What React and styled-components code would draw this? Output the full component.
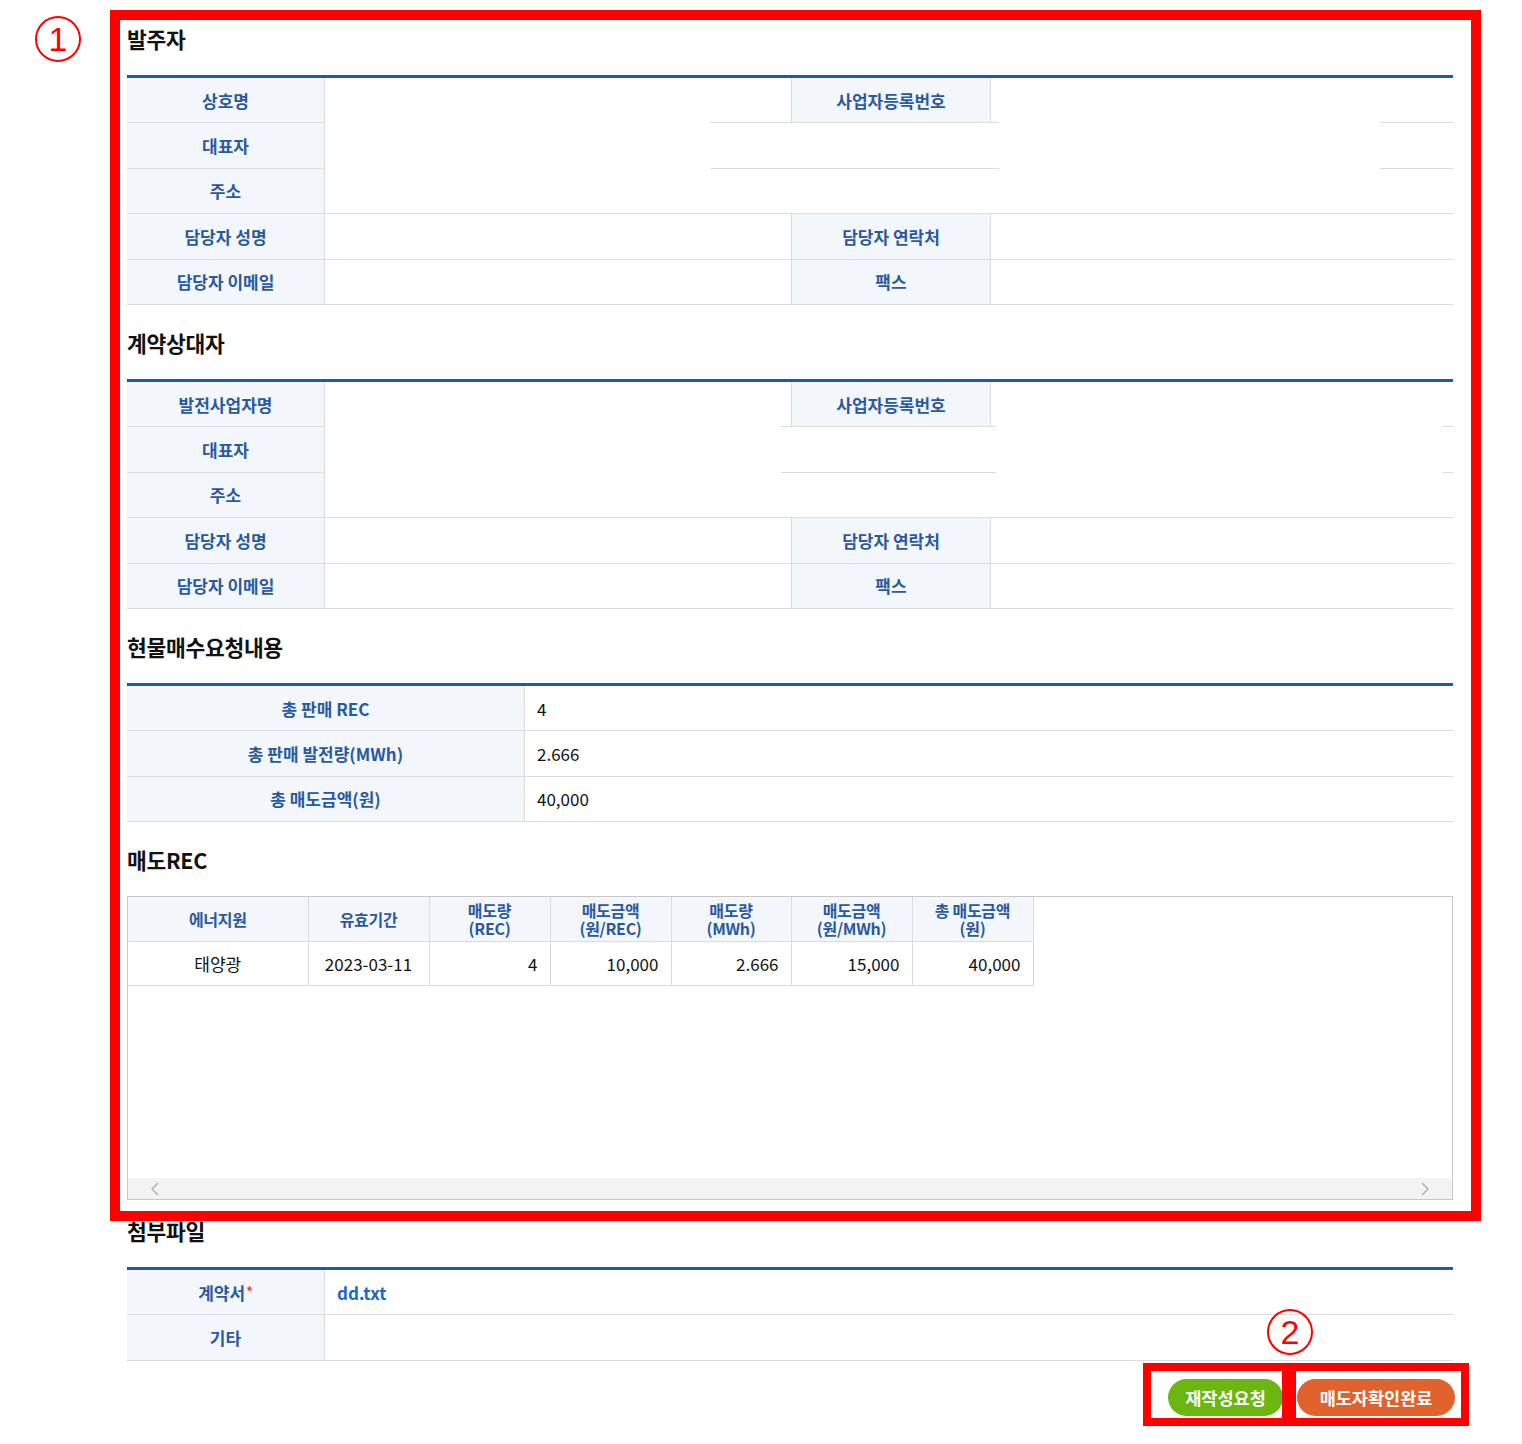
import React from 'react'
import styled, { createGlobalStyle } from 'styled-components'

const GlobalStyle = createGlobalStyle`
  html, body {
    margin: 0;
    padding: 0;
    background: #fff;
  }
  body {
    font-family: "Noto Sans CJK KR", "Noto Sans", sans-serif;
  }
`

// segment layout of the two party tables (widths in px, 1326 total)
const ordererRows = [
  [
    { w: 198, label: '상호명', line: true },
    { w: 385 },
    { w: 81, line: true },
    { w: 200, label: '사업자등록번호', line: true, edge: true },
    { w: 8, line: true },
    { w: 381 },
    { w: 73, line: true },
  ],
  [
    { w: 198, label: '대표자', line: true },
    { w: 386 },
    { w: 288, line: true },
    { w: 381 },
    { w: 73, line: true },
  ],
  [
    { w: 198, label: '주소', line: true },
    { w: 1128, line: true },
  ],
  [
    { w: 198, label: '담당자 성명', line: true },
    { w: 466, line: true },
    { w: 200, label: '담당자 연락처', line: true, edge: true },
    { w: 462, line: true },
  ],
  [
    { w: 198, label: '담당자 이메일', line: true },
    { w: 466, line: true },
    { w: 200, label: '팩스', line: true, edge: true },
    { w: 462, line: true },
  ],
]

const partnerRows = [
  [
    { w: 198, label: '발전사업자명', line: true },
    { w: 456 },
    { w: 10, line: true },
    { w: 200, label: '사업자등록번호', line: true, edge: true },
    { w: 5, line: true },
    { w: 447 },
    { w: 10, line: true },
  ],
  [
    { w: 198, label: '대표자', line: true },
    { w: 456 },
    { w: 215, line: true },
    { w: 447 },
    { w: 10, line: true },
  ],
  [
    { w: 198, label: '주소', line: true },
    { w: 1128, line: true },
  ],
  ordererRows[3],
  ordererRows[4],
]

const requestRows = [
  [
    { w: 398, label: '총 판매 REC', line: true },
    { w: 928, text: '4', line: true },
  ],
  [
    { w: 398, label: '총 판매 발전량(MWh)', line: true },
    { w: 928, text: '2.666', line: true },
  ],
  [
    { w: 398, label: '총 매도금액(원)', line: true },
    { w: 928, text: '40,000', line: true },
  ],
]

const recCols = [
  { w: 180, head: ['에너지원'], value: '태양광', align: 'center' },
  { w: 121, head: ['유효기간'], value: '2023-03-11', align: 'center' },
  { w: 121, head: ['매도량', '(REC)'], value: '4', align: 'right' },
  { w: 121, head: ['매도금액', '(원/REC)'], value: '10,000', align: 'right' },
  { w: 120, head: ['매도량', '(MWh)'], value: '2.666', align: 'right' },
  { w: 121, head: ['매도금액', '(원/MWh)'], value: '15,000', align: 'right' },
  { w: 121, head: ['총 매도금액', '(원)'], value: '40,000', align: 'right' },
]

const InfoTable = ({ rows }) => (
  <Table>
    {rows.map((row, i) => (
      <Row key={i}>
        {row.map((c, j) =>
          c.label ? (
            <HeadCell key={j} $w={c.w} $line={c.line} $edge={c.edge}>
              {c.label}
              {c.required && <Required>*</Required>}
            </HeadCell>
          ) : (
            <Cell key={j} $w={c.w} $line={c.line} $pad={!!(c.text || c.link)}>
              {c.link ? <FileLink href="#">{c.link}</FileLink> : c.text}
            </Cell>
          )
        )}
      </Row>
    ))}
  </Table>
)

const Chevron = ({ dir }) => (
  <svg width="10" height="14" viewBox="0 0 10 14">
    <polyline
      points={dir === 'left' ? '8,1 2,7 8,13' : '2,1 8,7 2,13'}
      fill="none"
      stroke="#b4b4b4"
      strokeWidth="1.6"
    />
  </svg>
)

const App = () => {
  return (
    <Page>
      <GlobalStyle />
      <Content>
        <Title>발주자</Title>
        <InfoTable rows={ordererRows} />

        <Title $gap={22}>계약상대자</Title>
        <InfoTable rows={partnerRows} />

        <Title $gap={22}>현물매수요청내용</Title>
        <InfoTable rows={requestRows} />

        <Title $gap={22}>매도REC</Title>
        <ScrollBox>
          <RecTable>
            <colgroup>
              {recCols.map((c, i) => <col key={i} style={{ width: c.w }} />)}
            </colgroup>
            <thead>
              <tr>
                {recCols.map((c, i) => (
                  <Th key={i}>
                    {c.head.map((h, k) => <HeadLine key={k}>{h}</HeadLine>)}
                  </Th>
                ))}
              </tr>
            </thead>
            <tbody>
              <tr>
                {recCols.map((c, i) => (
                  <Td key={i} $align={c.align}>{c.value}</Td>
                ))}
              </tr>
            </tbody>
          </RecTable>
          <Scrollbar>
            <Chevron dir="left" />
            <Chevron dir="right" />
          </Scrollbar>
        </ScrollBox>

        <Title $gap={15}>첨부파일</Title>
        <InfoTable
          rows={[
            [
              { w: 198, label: '계약서', required: true, line: true },
              { w: 1128, link: 'dd.txt', line: true },
            ],
            [
              { w: 198, label: '기타', line: true },
              { w: 1128, line: true },
            ],
          ]}
        />

        <Buttons>
          <Button $tone="#6cb612" $w={115}>재작성요청</Button>
          <Button $tone="#e0632e" $w={158}>매도자확인완료</Button>
        </Buttons>
      </Content>

      {/* annotation overlays */}
      <Frame $x={110} $y={10} $w={1371} $h={1211} $t={10} />
      <Frame $x={1143} $y={1363} $w={147} $h={63} $t={8} />
      <Frame $x={1288} $y={1363} $w={181} $h={63} $t={8} />
      <Marker $x={35} $y={16}>1</Marker>
      <Marker $x={1267} $y={1309}>2</Marker>
    </Page>
  )
}

export default App

const Page = styled.div`
  position: relative;
  width: 1522px;
  min-height: 1444px;
  background: #fff;
`

const Content = styled.div`
  width: 1326px;
  padding: 23px 0 0 127px;
`

const Title = styled.h2`
  margin: ${p => p.$gap || 0}px 0 20px;
  height: 32px;
  line-height: 32px;
  font-size: 21.5px;
  font-weight: 700;
  color: #111;
  letter-spacing: -0.3px;
`

const Table = styled.div`
  border-top: 3px solid #2358a6;
`

const Row = styled.div`
  display: flex;
  height: 45.4px;
`

const Cell = styled.div`
  box-sizing: border-box;
  flex: 0 0 ${p => p.$w}px;
  min-width: 0;
  display: flex;
  align-items: center;
  padding-left: ${p => (p.$pad ? 12 : 0)}px;
  border-bottom: 1px solid ${p => (p.$line ? '#dcdcdc' : 'transparent')};
  font-size: 17px;
  color: #111;
  white-space: nowrap;
  overflow: hidden;
`

const HeadCell = styled(Cell)`
  justify-content: center;
  padding: 0;
  background: #f3f6fb;
  color: #2a5a9e;
  font-weight: 700;
  border-right: 1px solid #dcdcdc;
  border-left: ${p => (p.$edge ? '1px solid #dcdcdc' : 'none')};
`

const Required = styled.span`
  color: #e8463c;
  font-size: 13px;
  margin-left: 1px;
  align-self: flex-start;
  margin-top: 11px;
`

const FileLink = styled.a`
  color: #1a68c2;
  font-weight: 700;
  text-decoration: none;
`

const ScrollBox = styled.div`
  box-sizing: border-box;
  height: 304px;
  border: 1px solid #c8c8c8;
  display: flex;
  flex-direction: column;
  justify-content: space-between;
`

const RecTable = styled.table`
  width: 905px;
  table-layout: fixed;
  border-collapse: collapse;
`

const Th = styled.th`
  height: 44px;
  padding: 0;
  background: #f3f6fb;
  color: #2a5a9e;
  font-size: 16px;
  font-weight: 700;
  border-right: 1px solid #dcdcdc;
  border-bottom: 1px solid #dcdcdc;
  vertical-align: middle;
  letter-spacing: -0.3px;
`

const HeadLine = styled.div`
  line-height: 18px;
  height: 18px;
  white-space: nowrap;
`

const Td = styled.td`
  height: 43px;
  padding: 0 12px;
  text-align: ${p => p.$align};
  font-size: 17px;
  color: #111;
  border-right: 1px solid #dcdcdc;
  border-bottom: 1px solid #dcdcdc;
`

const Scrollbar = styled.div`
  height: 21px;
  background: #f3f3f3;
  display: flex;
  align-items: center;
  justify-content: space-between;
  padding: 0 22px;
`

const Buttons = styled.div`
  display: flex;
  justify-content: flex-end;
  gap: 14px;
  margin: 18px -2px 0 0;
`

const Button = styled.button`
  width: ${p => p.$w}px;
  height: 37px;
  border: none;
  border-radius: 19px;
  background: ${p => p.$tone};
  color: #fff;
  font-family: "Noto Sans CJK KR", sans-serif;
  font-size: 17.5px;
  font-weight: 700;
  padding: 0;
  cursor: pointer;
  white-space: nowrap;
`

const Frame = styled.div`
  position: absolute;
  left: ${p => p.$x}px;
  top: ${p => p.$y}px;
  width: ${p => p.$w}px;
  height: ${p => p.$h}px;
  box-sizing: border-box;
  border: ${p => p.$t}px solid #ff0000;
  pointer-events: none;
`

const Marker = styled.div`
  position: absolute;
  left: ${p => p.$x}px;
  top: ${p => p.$y}px;
  width: 46px;
  height: 46px;
  box-sizing: border-box;
  border: 2.5px solid #ff0000;
  border-radius: 50%;
  display: flex;
  align-items: center;
  justify-content: center;
  color: #ff0000;
  font-family: "Liberation Sans", sans-serif;
  font-size: 34px;
  line-height: 1;
`
